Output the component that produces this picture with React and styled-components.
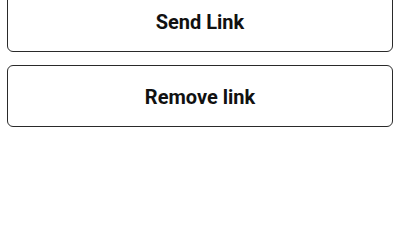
import React from 'react';
import styled, { createGlobalStyle } from 'styled-components';

const GlobalStyle = createGlobalStyle`
  html, body {
    margin: 0;
    padding: 0;
    background: #ffffff;
    font-family: Roboto, "Liberation Sans", sans-serif;
  }
`;

const Page = styled.div`
  width: 400px;
  height: 225px;
  overflow: hidden;
  background: #ffffff;
`;

const ButtonList = styled.div`
  display: flex;
  flex-direction: column;
  gap: 13px;
  padding: 0 7px;
  margin-top: -10px;
`;

const ActionButton = styled.button`
  display: flex;
  align-items: center;
  justify-content: center;
  box-sizing: border-box;
  width: 100%;
  height: 62px;
  padding: 2px 0 0;
  background: #ffffff;
  border: 1.5px solid #2a2a2a;
  border-radius: 6px;
  font-family: Roboto, "Liberation Sans", sans-serif;
  font-size: 20px;
  font-weight: 700;
  color: #111111;
  cursor: pointer;
`;

const App = () => {
  const actions = ['Send Link', 'Remove link'];

  return (
    <Page>
      <GlobalStyle />
      <ButtonList>
        {actions.map(label => (
          <ActionButton key={label}>{label}</ActionButton>
        ))}
      </ButtonList>
    </Page>
  );
};

export default App;
